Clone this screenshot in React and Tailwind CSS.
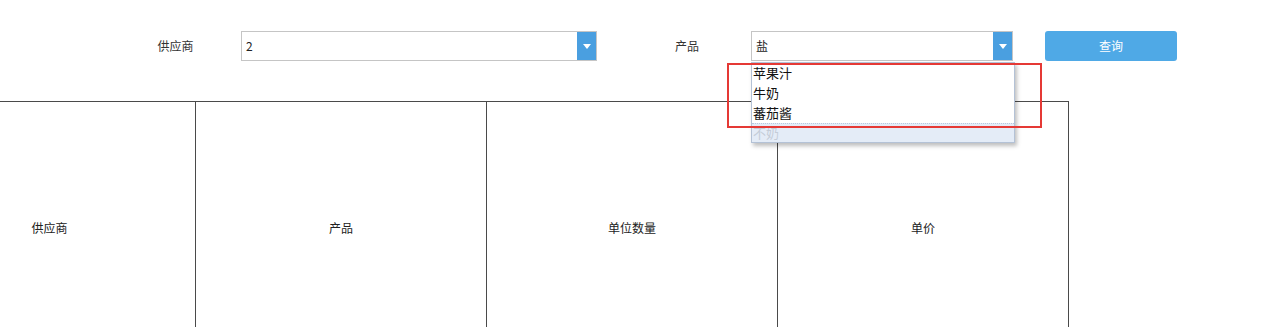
import React from "react";

const columns = [
  { label: "供应商", width: "w-[292px]" },
  { label: "产品", width: "w-[291px]" },
  { label: "单位数量", width: "w-[291px]" },
  { label: "单价", width: "w-[291px]" },
];
const products = ["苹果汁", "牛奶", "蕃茄酱"];

const ArrowButton = () => (
  <div className="flex h-full w-[19px] items-center justify-center bg-[#4a9fe0]">
    <svg width="8" height="5" viewBox="0 0 8 5">
      <path d="M0 0 L8 0 L4 5 Z" fill="#ffffff" />
    </svg>
  </div>
);

const Select = ({ value, width, children }) => (
  <div className={`relative h-[30px] ${width}`}>
    <div className="flex h-full border border-[#c5c5c5] bg-white">
      <div className="flex flex-1 items-center pl-[4px] text-[12px] text-[#222]">{value}</div>
      <ArrowButton />
    </div>
    {children}
  </div>
);

const App = () => {
  return (
    <div
      className="relative h-[327px] w-[1280px] overflow-hidden bg-white text-[#333]"
      style={{ fontFamily: '"Noto Sans CJK SC", "Noto Sans", sans-serif' }}
    >
      <div className="flex items-center pt-[31px]">
        <div className="w-[110px]" />
        <div className="w-[131px] text-center text-[12px]">供应商</div>
        <Select value="2" width="w-[356px]" />
        <div className="ml-[26px] w-[128px] text-center text-[12px]">产品</div>
        <Select value="盐" width="w-[262px]">
          <div className="absolute left-0 top-[31px] z-10 w-[264px] border border-[#b4c2d6] bg-white shadow-[2px_3px_4px_rgba(0,0,0,0.25)]">
            {products.map((p) => (
              <div key={p} className="flex h-[20px] items-center pl-[1px] text-[13px] text-[#111]">
                {p}
              </div>
            ))}
            <div className="flex h-[19px] items-center border-t border-dotted border-[#b9c9e0] bg-[#e4ecf7] pl-[1px] text-[13px] text-[#c4ccd8]">
              不奶
            </div>
          </div>
        </Select>
        <button className="ml-[32px] h-[30px] w-[132px] rounded-[3px] bg-[#4fa9e6] text-[12px] text-white">
          查询
        </button>
      </div>

      <div className="ml-[-97px] mt-[40px] flex w-fit border-t border-r border-[#4a4a4a]">
        {columns.map((c) => (
          <div
            key={c.label}
            className={`flex h-[252px] items-center justify-center border-l border-[#4a4a4a] text-[12px] text-[#222] ${c.width}`}
          >
            {c.label}
          </div>
        ))}
      </div>

      <div className="pointer-events-none absolute left-[727px] top-[63px] z-20 h-[65px] w-[315px] border-2 border-[#e53935]" />
    </div>
  );
};

export default App;
